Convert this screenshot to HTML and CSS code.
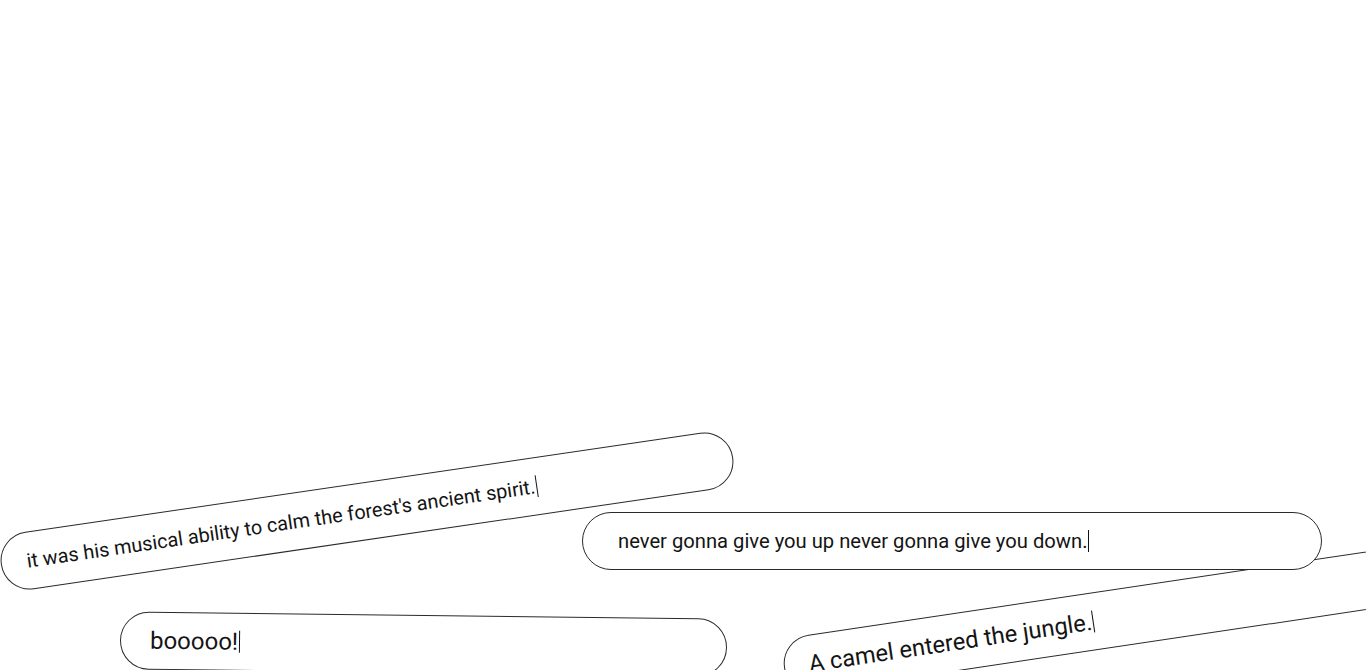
FILE: index.html
```html
<!DOCTYPE html>
<html lang="en">
<head>
<meta charset="utf-8">
<title>Falling inputs</title>
<link rel="stylesheet" href="styles.css">
</head>
<body>
  <main class="canvas">
    <div class="pill pill-camel"><span class="text">A camel entered the jungle.</span><span class="caret"></span></div>
    <div class="pill pill-spirit"><span class="text">it was his musical ability to calm the forest's ancient spirit.</span><span class="caret"></span></div>
    <div class="pill pill-never"><span class="text">never gonna give you up never gonna give you down.</span><span class="caret"></span></div>
    <div class="pill pill-boo"><span class="text">booooo!</span><span class="caret"></span></div>
  </main>
</body>
</html>
```

FILE: styles.css
```css
html, body {
  margin: 0;
  padding: 0;
  background: #ffffff;
  overflow: hidden;
}

.canvas {
  position: relative;
  width: 1366px;
  height: 670px;
  overflow: hidden;
  font-family: Roboto, "Liberation Sans", sans-serif;
  color: #141414;
}

.pill {
  position: absolute;
  box-sizing: border-box;
  height: 58px;
  width: 740px;
  border: 1px solid #2a2a2a;
  border-radius: 29px;
  background: #ffffff;
  display: flex;
  align-items: center;
  white-space: nowrap;
}

.caret {
  display: inline-block;
  width: 1px;
  height: 22px;
  margin-left: 1px;
  background: #111;
}

.pill-spirit {
  left: -3px;
  top: 482px;
  transform: rotate(-8.34deg);
  padding-left: 25px;
  font-size: 19.9px;
}

.pill-never {
  left: 582px;
  top: 512px;
  padding-left: 35px;
  font-size: 20.2px;
}

.pill-boo {
  left: 120px;
  top: 615px;
  width: 607px;
  transform: rotate(0.7deg);
  padding-left: 29px;
  font-size: 24px;
}

.pill-camel {
  left: 780px;
  top: 584px;
  transform: rotate(-8.5deg);
  padding-left: 24px;
  font-size: 23.7px;
}
```
